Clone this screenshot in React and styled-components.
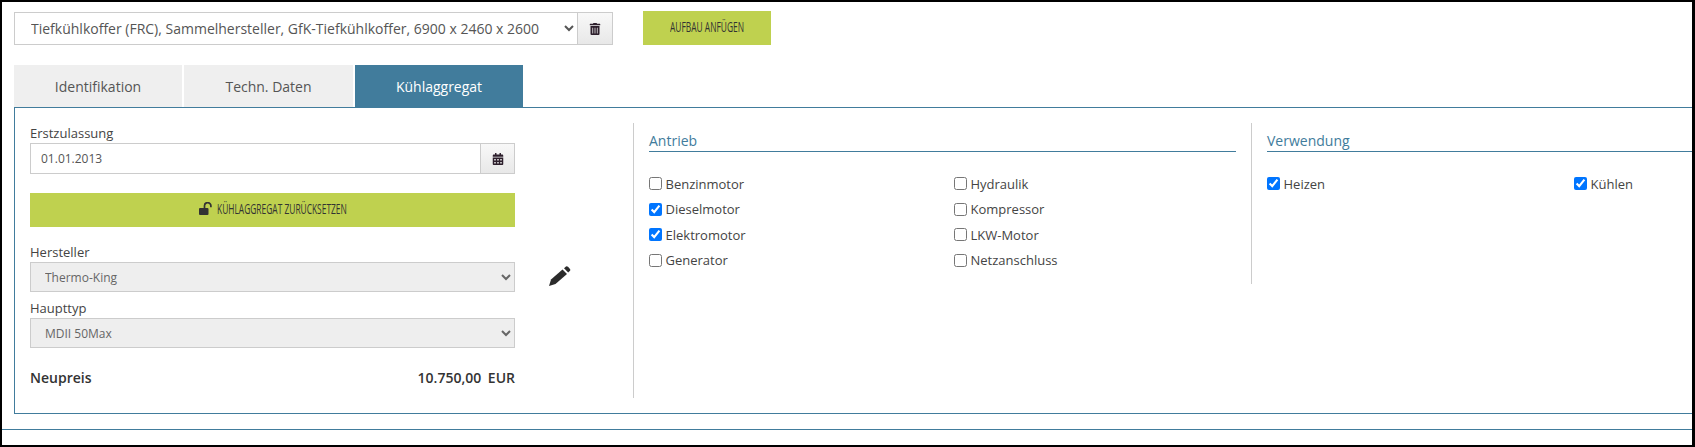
import React from "react";
import styled, { createGlobalStyle } from "styled-components";
import { FaTrashAlt, FaCalendarAlt } from "react-icons/fa";

const Global = createGlobalStyle`
  html, body { margin: 0; padding: 0; background: #fff; }
  body { font-family: "Open Sans", "Liberation Sans", sans-serif; font-size: 13px; color: #333; }
  * { box-sizing: border-box; }
`;

const Frame = styled.div`
  width: 1695px; height: 447px; overflow: hidden;
  border-style: solid; border-color: #000; border-width: 2px 3px 2px 2px;
  background: #fff; display: flex; flex-direction: column;
`;
const TopRow = styled.div`
  display: flex; align-items: flex-start; gap: 30px;
  padding: 9px 0 0 12px; height: 63px;
`;
const SelectGroup = styled.div`
  display: flex; width: 599px; height: 33px; margin-top: 1px;
`;
const MainSelect = styled.select`
  flex: 1; min-width: 0; height: 100%; border: 1px solid #ccc; border-right: 0; background: #fff;
  color: #555; font: 14px "Open Sans", sans-serif; padding: 0 6px 0 12px; border-radius: 0; outline: none;
`;
const Addon = styled.div`
  width: ${p => p.$w}px; height: 100%; flex: none; display: flex; align-items: center; justify-content: center;
  border: 1px solid #ccc; background: linear-gradient(#f8f8f8, #e8e8e8); color: #2d1f2c; font-size: 12px;
`;
const GreenButton = styled.div`
  background: #bfd14f; color: #333; display: flex; align-items: center; justify-content: center;
  height: 34px; padding-bottom: 3px; width: ${p => p.$w}; margin-top: ${p => p.$mt || 0}px;
`;
const Squeezed = styled.span`
  display: inline-block; white-space: nowrap; font-size: 14px; text-transform: uppercase;
  transform: scaleX(0.6); transform-origin: left center;
  width: ${p => p.$w}px; flex: none;
`;
const UnlockIcon = styled.svg`
  width: 14px; height: 13px; margin-right: 4px; flex: none;
`;
const Tabs = styled.div`
  display: flex; gap: 2px; padding-left: 12px; height: 42px;
`;
const Tab = styled.div`
  width: ${p => p.$w}px; display: flex; align-items: center; justify-content: center;
  font-size: 14px; background: ${p => (p.$active ? "#417c9c" : "#efefef")};
  color: ${p => (p.$active ? "#fff" : "#555")};
`;
const Panel = styled.div`
  margin-left: 12px; height: 307px; flex: none; overflow: hidden;
  border: 1px solid #417c9c; border-right: 0;
  display: flex; align-items: flex-start; padding: 15px 0 0 15px;
`;
const LeftCol = styled.div`
  width: 485px; flex: none;
`;
const FieldLabel = styled.div`
  font-size: 13px; line-height: 19px; color: #444; margin-top: ${p => p.$mt || 0}px;
  padding-top: ${p => p.$pt || 0}px;
`;
const InputGroup = styled.div`
  display: flex; height: 31px;
`;
const DateInput = styled.input`
  flex: 1; min-width: 0; height: 100%; border: 1px solid #ccc; border-right: 0; padding: 0 10px;
  font: 12px "Open Sans", sans-serif; color: #555; outline: none;
`;
const GrayField = styled.select`
  width: 100%; height: 30px; display: block; border: 1px solid #ccc; border-radius: 0; background: #eee;
  font: 12px "Open Sans", sans-serif; color: #666; padding: 0 10px; outline: none; opacity: 1;
`;
const PriceRow = styled.div`
  display: flex; justify-content: space-between; align-items: center;
  height: 20px; margin-top: 19px; font-size: 14px; font-weight: 600; color: #333;
`;
const PriceValue = styled.span`
  word-spacing: 3px;
`;
const PencilCell = styled.div`
  width: 22px; flex: none; margin: 143px 62px 0 34px; line-height: 0;
`;
const PencilIcon = styled.svg`
  width: 22px; height: 20px; display: block; fill: #2b2b2b;
`;
const RightArea = styled.div`
  flex: 1; min-width: 0; display: flex; height: 275px; border-left: 1px solid #ccc; align-items: flex-start;
`;
const Section = styled.div`
  height: 161px; flex: none; width: ${p => p.$w}px;
  padding: ${p => p.$pad};
  border-left: ${p => (p.$divided ? "1px solid #ccc" : "0")};
`;
const Heading = styled.div`
  font-size: 14px; line-height: 20px; padding-top: 8px; color: #417c9c;
  border-bottom: 1px solid #417c9c; height: 29px;
`;
const Checks = styled.div`
  display: grid; grid-template-columns: repeat(2, ${p => p.$col}px);
  grid-auto-flow: column; grid-template-rows: repeat(${p => p.$rows}, 25.5px);
  margin-top: 19px;
`;
const CheckLabel = styled.label`
  display: flex; align-items: center; gap: 3.5px; font-size: 13px; color: #444; height: 25px;
`;
const Box = styled.input`
  width: 13px; height: 13px; margin: 0; flex: none;
`;
const Footer = styled.div`
  margin-top: 15px; border-top: 1px solid #417c9c; height: 16px;
`;

const Check = ({ label, on }) => (
  <CheckLabel>
    <Box type="checkbox" defaultChecked={!!on} />
    {label}
  </CheckLabel>
);

export default function App() {
  return (
    <Frame>
      <Global />
      <TopRow>
        <SelectGroup>
          <MainSelect defaultValue="a">
            <option value="a">Tiefkühlkoffer (FRC), Sammelhersteller, GfK-Tiefkühlkoffer, 6900 x 2460 x 2600</option>
          </MainSelect>
          <Addon $w={36}><FaTrashAlt /></Addon>
        </SelectGroup>
        <GreenButton $w="128px">
          <Squeezed $w={74}>Aufbau anfügen</Squeezed>
        </GreenButton>
      </TopRow>
      <Tabs>
        <Tab $w={168}>Identifikation</Tab>
        <Tab $w={169}>Techn. Daten</Tab>
        <Tab $w={168} $active>Kühlaggregat</Tab>
      </Tabs>
      <Panel>
        <LeftCol>
          <FieldLabel $pt={1}>Erstzulassung</FieldLabel>
          <InputGroup>
            <DateInput defaultValue="01.01.2013" />
            <Addon $w={35}><FaCalendarAlt /></Addon>
          </InputGroup>
          <GreenButton $w="100%" $mt={19}>
            <UnlockIcon viewBox="0 0 14 13">
              <rect x="0" y="6" width="9.5" height="7" rx="1" fill="#333" />
              <path d="M5.5 6.5V3.8a3.2 3.2 0 0 1 6.4 0V5.2" fill="none" stroke="#333" strokeWidth="1.7" />
            </UnlockIcon>
            <Squeezed $w={130}>Kühlaggregat zurücksetzen</Squeezed>
          </GreenButton>
          <FieldLabel $mt={16}>Hersteller</FieldLabel>
          <GrayField defaultValue="t"><option value="t">Thermo-King</option></GrayField>
          <FieldLabel $mt={7}>Haupttyp</FieldLabel>
          <GrayField defaultValue="m"><option value="m">MDII 50Max</option></GrayField>
          <PriceRow>
            <span>Neupreis</span>
            <PriceValue>10.750,00 EUR</PriceValue>
          </PriceRow>
        </LeftCol>
        <PencilCell>
          <PencilIcon viewBox="0 0 22 20">
            <path d="M0 20L2 13.5L13.5 3.5L18 8L6.5 18Z" />
            <path d="M15 2.2L17 .4Q18 0 19 .8L21 3Q21.7 4 21 4.8L19.2 6.6Z" />
          </PencilIcon>
        </PencilCell>
        <RightArea>
          <Section $w={617} $pad="0 15px 0 15px">
            <Heading>Antrieb</Heading>
            <Checks $col={305} $rows={4}>
              <Check label="Benzinmotor" />
              <Check label="Dieselmotor" on />
              <Check label="Elektromotor" on />
              <Check label="Generator" />
              <Check label="Hydraulik" />
              <Check label="Kompressor" />
              <Check label="LKW-Motor" />
              <Check label="Netzanschluss" />
            </Checks>
          </Section>
          <Section $w={460} $divided $pad="0 0 0 15px">
            <Heading>Verwendung</Heading>
            <Checks $col={307} $rows={1}>
              <Check label="Heizen" on />
              <Check label="Kühlen" on />
            </Checks>
          </Section>
        </RightArea>
      </Panel>
      <Footer />
    </Frame>
  );
}
